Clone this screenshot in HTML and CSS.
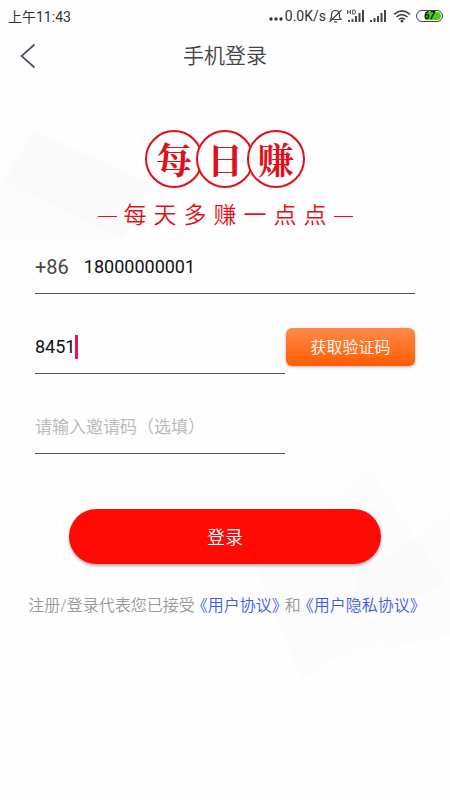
FILE: index.html
```
<!DOCTYPE html>
<html lang="zh-CN">
<head>
    <meta charset="UTF-8">
    <meta name="viewport" content="width=device-width, initial-scale=1.0">
    <title>手机登录</title>
    <link rel="stylesheet" href="styles.css">
</head>
<body>
    <!-- Pale background shapes -->
    <svg class="backdrop" viewBox="0 0 450 800" preserveAspectRatio="none" aria-hidden="true">
        <polygon points="0,88 196,81 165,160 35,131 0,180" fill="#fdfdfd"/>
        <polygon points="35,131 149,183 123,240 0,186" fill="#fafafa"/>
        <polygon points="0,180 123,240 0,240" fill="#fcfcfc"/>
        <polygon points="0,296 214,304 208,320 30,320" fill="#fdfdfd"/>
        <polygon points="257,572 369,469 447,584 302,679" fill="#fcfcfc"/>
        <polygon points="357,577 415,538 447,584 350,622" fill="#fafafa"/>
        <polygon points="415,538 450,511 450,636 335,658 350,622 447,584" fill="#fcfcfc"/>
        <polygon points="335,658 380,640 450,700 450,720" fill="#fdfdfd"/>
    </svg>

    <div class="status-bar">
        <span class="status-time">上午11:43</span>
        <div class="status-icons">
            <svg width="14" height="14" viewBox="0 0 14 14" fill="#333">
                <circle cx="2" cy="10" r="1.7"/><circle cx="7" cy="10" r="1.7"/><circle cx="12" cy="10" r="1.7"/>
            </svg>
            <span class="status-speed">0.0K/s</span>
            <svg class="icon-bell" width="15" height="14" viewBox="0 0 15 14" fill="none" stroke="#444" stroke-width="1.2">
                <path d="M2.500 10.500h10.500L11.500 8.500V5.500C11.500 3 10 1.500 7.500 1.500S3.500 3 3.500 5.500v3L2 10.500M6 12.800h3M1.500 13L13.500 1"/>
            </svg>
            <svg class="icon-signal" width="18" height="14" viewBox="0 0 18 14">
                <path d="M1 11h2v2H1zM4.500 10h2v3h-2zM8 7h2v6H8zM11.500 4h2v9h-2zM15 1h2v12h-2z" fill="#444"/>
                <path d="M.6 1v4M3.400 1v4M.6 3h2.800M5.600 1v4h1.200q1.700 0 1.700-2T6.800 1z" fill="none" stroke="#444" stroke-width=".9"/>
            </svg>
            <svg class="icon-signal" width="18" height="14" viewBox="0 0 18 14">
                <path d="M1 11h2v2H1zM4.500 9h2v4h-2zM8 7h2v6H8zM11.500 4h2v9h-2zM15 1h2v12h-2z" fill="#444"/>
            </svg>
            <svg class="icon-wifi" width="18" height="14" viewBox="0 0 18 14" fill="none" stroke="#444" stroke-width="1.6">
                <path d="M1 5.300Q9-1.500 17 5.300M3.500 8Q9 3.300 14.500 8M6 10.500Q9 8 12 10.500"/>
                <circle cx="9" cy="12" r=".7" fill="#444"/>
            </svg>
            <span class="battery">67</span>
        </div>
    </div>

    <header class="header">
        <button class="back-btn" type="button" aria-label="返回">
            <svg width="16" height="26" viewBox="0 0 16 26" fill="none" stroke="#4a5260" stroke-width="1.7">
                <path d="M14.500 1.500L1.500 13l13 11.500"/>
            </svg>
        </button>
        <h1>手机登录</h1>
    </header>

    <main>
        <div class="logo">
            <span>每</span>
            <span>日</span>
            <span>赚</span>
        </div>
        <p class="slogan">
            <span>每</span><span>天</span><span>多</span><span>赚</span><span>一</span><span>点</span><span>点</span>
        </p>

        <form class="login-form">
            <div class="field">
                <label class="prefix" for="phone">+86</label>
                <input id="phone" type="tel" value="18000000001">
            </div>
            <div class="code-row">
                <div class="field">
                    <input id="code" class="code-input" type="text" inputmode="numeric" value="8451" aria-label="验证码">
                    <span class="caret"></span>
                </div>
                <button class="code-btn" type="button">获取验证码</button>
            </div>
            <div class="code-row">
                <div class="field">
                    <input id="invite" type="text" placeholder="请输入邀请码（选填）" aria-label="邀请码">
                </div>
            </div>
            <button class="login-btn" type="button">登录</button>
        </form>

        <p class="terms">
            <span>注册/登录代表您已接受</span>
            <a href="#agreement">《用户协议》</a>
            <span>和</span>
            <a href="#privacy">《用户隐私协议》</a>
        </p>
    </main>
</body>
</html>
```
FILE: styles.css
```
* {
    margin: 0;
    padding: 0;
    box-sizing: border-box;
}

body {
    position: relative;
    min-height: 100vh;
    background-color: #fefefe;
    color: #444;
    font-family: Roboto, "Noto Sans CJK SC", sans-serif;
    font-size: 16px;
}

button, input {
    font-family: inherit;
    border: none;
    background: none;
}

.backdrop {
    position: absolute;
    top: 0;
    left: 0;
    width: 100%;
    height: 100%;
    z-index: -1;
}

/* Status bar */
.status-bar {
    display: flex;
    justify-content: space-between;
    align-items: center;
    height: 32px;
    padding: 0 7px 0 8px;
    color: #333;
    font-size: 14px;
}

.status-icons {
    display: flex;
    align-items: center;
}

.status-speed {
    margin: 0 2px;
}

.icon-signal {
    margin-left: 4px;
}

.icon-wifi {
    margin: 0 5px 0 6px;
}

.battery {
    width: 27px;
    height: 12px;
    border: 1px solid #444;
    border-radius: 6px;
    background: linear-gradient(to right, #fff 30%, #4fce0b 30%) content-box;
    padding: 1px;
    color: #111;
    font-size: 10px;
    font-style: italic;
    font-weight: 700;
    line-height: 8px;
    text-align: center;
    overflow: hidden;
}

/* Title */
.header {
    display: grid;
    grid-template-columns: 40px 1fr 40px;
    align-items: center;
    height: 48px;
    padding: 0 10px;
}

.header h1 {
    font-size: 21px;
    font-weight: 350;
    line-height: 30px;
    text-align: center;
}

.back-btn {
    display: flex;
    padding: 0 10px;
    cursor: pointer;
}

/* Logo */
.logo {
    display: flex;
    justify-content: center;
    margin-top: 50px;
}

.logo span {
    width: 58px;
    height: 58px;
    border: 2px solid #e0101a;
    border-radius: 50%;
    background-color: #fefefe;
    color: #e0101a;
    font-family: "Noto Serif CJK SC", "Noto Sans CJK SC", serif;
    font-size: 36px;
    font-weight: 700;
    line-height: 54px;
    text-align: center;
}

.logo span + span {
    margin-left: -7px;
}

.slogan {
    display: flex;
    justify-content: center;
    align-items: center;
    gap: 7px;
    margin-top: 12px;
    color: #e0101a;
    font-size: 23px;
    font-weight: 350;
    line-height: 32px;
}

.slogan::before,
.slogan::after {
    content: "";
    width: 19px;
    height: 1px;
    background-color: #e0101a;
}

/* Form */
.login-form {
    display: flex;
    flex-direction: column;
    gap: 26px;
    padding: 8px 35px 0;
}

.field {
    display: flex;
    align-items: center;
    height: 54px;
    border-bottom: 1px solid #555;
}

.field input {
    flex: 1;
    min-width: 0;
    height: 32px;
    color: #111;
    font-size: 18px;
    outline: none;
}

.field input::placeholder {
    color: #bbb;
    font-size: 17px;
    opacity: 1;
}

.prefix {
    margin-right: 15px;
    font-size: 20px;
}

.code-row {
    display: grid;
    grid-template-columns: 1fr 129px;
    align-items: center;
    gap: 1px;
}

.field .code-input {
    flex: none;
    width: 4ch;
}

.caret {
    width: 3px;
    height: 24px;
    background-color: #e91455;
}

.code-btn {
    height: 38px;
    padding-bottom: 2px;
    border-radius: 6px;
    background: linear-gradient(#ff8a4a, #ff5c02);
    box-shadow: 0 1px 3px rgba(0, 0, 0, 0.3);
    color: #fff;
    font-size: 16px;
    font-weight: 350;
    cursor: pointer;
}

.login-btn {
    height: 55px;
    margin: 29px 34px 0;
    padding-bottom: 2px;
    border-radius: 28px;
    background-color: #ff0b05;
    box-shadow: 0 2px 3px rgba(0, 0, 0, 0.3);
    color: #fff;
    font-size: 18px;
    font-weight: 350;
    cursor: pointer;
}

/* Agreement links */
.terms {
    display: flex;
    justify-content: center;
    gap: 5px;
    margin-top: 30px;
    padding-right: 4px;
    color: #999;
    font-weight: 350;
    line-height: 24px;
    white-space: nowrap;
}

.terms a {
    color: #3d5ae8;
    font-feature-settings: "halt";
    text-decoration: none;
}
```
